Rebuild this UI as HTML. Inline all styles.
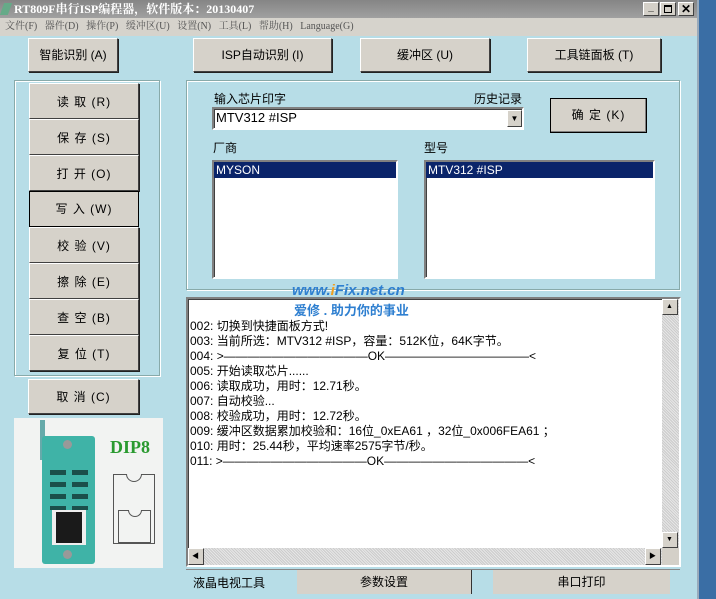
<!DOCTYPE html><html><head><meta charset="utf-8"><style>
*{margin:0;padding:0;box-sizing:border-box}
body{width:716px;height:599px;overflow:hidden;background:#b7dde7;font-family:"Liberation Sans","Noto Sans CJK SC",sans-serif;font-size:12px;color:#000;position:relative}
.a{position:absolute}
.btn{position:absolute;background:#d6d2ca;border:1px solid;border-color:#fff #404040 #404040 #fff;box-shadow:1px 1px 0 #222;text-align:center;font-size:12px;letter-spacing:1px}
.tb{letter-spacing:0}
.grp{position:absolute;border:1px solid #8aa;box-shadow:1px 1px 0 #fff inset,1px 1px 0 #fff}
.lb{position:absolute;background:#fff;border:2px solid;border-color:#808080 #fff #fff #808080;box-shadow:inset 1px 1px 0 #404040}
.sel{background:#0a246a;color:#fff;height:16px;line-height:16px;padding-left:2px}
.log div{height:15px;line-height:15px;white-space:nowrap}
.chk{background-color:#e6e6e6;background-image:repeating-linear-gradient(45deg,#ccc 0 1px,transparent 1px 2px)}
</style></head><body>
<div class="a" style="left:0;top:0;width:697px;height:18px;background:linear-gradient(#858585,#a0a0a0);color:#fff;font-weight:bold;font-size:12px;line-height:18px;padding-left:14px;font-family:'Liberation Serif','Noto Serif CJK SC',serif">RT809F串行ISP编程器，软件版本：20130407</div>
<div class="a" style="left:2px;top:3px;width:8px;height:12px;background:#6a8;transform:skew(-20deg)"></div>
<div class="a" style="left:643px;top:2px;width:16px;height:14px;background:#d4d0c8;border:1px solid;border-color:#fff #404040 #404040 #fff;font-size:10px;text-align:center;line-height:10px;font-weight:bold">_</div>
<div class="a" style="left:660px;top:2px;width:16px;height:14px;background:#d4d0c8;border:1px solid;border-color:#fff #404040 #404040 #fff"><div class="a" style="left:3px;top:2px;width:8px;height:8px;border:1px solid #000;border-top-width:2px"></div></div>
<div class="a" style="left:678px;top:2px;width:16px;height:14px;background:#d4d0c8;border:1px solid;border-color:#fff #404040 #404040 #fff;font-size:12px;text-align:center;line-height:12px;font-weight:bold">✕</div>
<div class="a" style="left:697px;top:0;width:19px;height:599px;background:#3a6ea5;border-left:2px solid #9ab"></div>
<div class="a" style="left:0;top:18px;width:697px;height:18px;background:#d6d3cc;color:#555;font-size:10px;line-height:18px;padding-left:5px;word-spacing:5px;font-family:'Liberation Serif','Noto Serif CJK SC',serif">文件(F) 器件(D) 操作(P) 缓冲区(U) 设置(N) 工具(L) 帮助(H) Language(G)</div>

<div class="btn tb" style="left:28px;top:38px;width:90px;height:34px;line-height:32px">智能识别 (A)</div>
<div class="btn tb" style="left:193px;top:38px;width:139px;height:34px;line-height:32px">ISP自动识别 (I)</div>
<div class="btn tb" style="left:360px;top:38px;width:130px;height:34px;line-height:32px">缓冲区 (U)</div>
<div class="btn tb" style="left:527px;top:38px;width:134px;height:34px;line-height:32px">工具链面板 (T)</div>

<div class="grp" style="left:14px;top:80px;width:146px;height:296px"></div>
<div class="btn" style="left:29px;top:83px;width:110px;height:36px;line-height:36px">读 取 (R)</div>
<div class="btn" style="left:29px;top:119px;width:110px;height:36px;line-height:36px">保 存 (S)</div>
<div class="btn" style="left:29px;top:155px;width:110px;height:36px;line-height:36px">打 开 (O)</div>
<div class="btn" style="left:29px;top:191px;width:110px;height:36px;line-height:34px;border:1px solid #000;box-shadow:none">写 入 (W)</div>
<div class="btn" style="left:29px;top:227px;width:110px;height:36px;line-height:36px">校 验 (V)</div>
<div class="btn" style="left:29px;top:263px;width:110px;height:36px;line-height:36px">擦 除 (E)</div>
<div class="btn" style="left:29px;top:299px;width:110px;height:36px;line-height:36px">查 空 (B)</div>
<div class="btn" style="left:29px;top:335px;width:110px;height:36px;line-height:36px">复 位 (T)</div>
<div class="btn" style="left:28px;top:379px;width:111px;height:35px;line-height:35px">取 消 (C)</div>

<div class="a" style="left:14px;top:418px;width:149px;height:150px;background:#f2f3f2"></div>
<div class="a" style="left:40px;top:420px;width:5px;height:40px;background:#6aa;"></div>
<div class="a" style="left:42px;top:436px;width:53px;height:128px;background:#3fb3a7;border-radius:3px"></div>
<div class="a" style="left:63px;top:440px;width:9px;height:9px;border-radius:50%;background:#999"></div>
<div class="a" style="left:63px;top:550px;width:9px;height:9px;border-radius:50%;background:#999"></div>
<div class="a" style="left:50px;top:470px;width:38px;height:40px;background:repeating-linear-gradient(#1b4f4a 0 5px,#3fb3a7 5px 12px)"></div>
<div class="a" style="left:66px;top:470px;width:6px;height:40px;background:#3fb3a7"></div>
<div class="a" style="left:52px;top:510px;width:34px;height:35px;background:#eee"></div>
<div class="a" style="left:56px;top:512px;width:26px;height:31px;background:#1a1a1a"></div>
<div class="a" style="left:110px;top:437px;font-family:'Liberation Serif',serif;font-size:18px;font-weight:bold;color:#2a9a30">DIP8</div>
<div class="a" style="left:113px;top:474px;width:42px;height:70px;border:1px solid #555"></div>
<div class="a" style="left:126px;top:474px;width:16px;height:8px;border:1px solid #555;border-top:none;border-radius:0 0 8px 8px;background:#f2f3f2"></div>
<div class="a" style="left:118px;top:510px;width:33px;height:33px;border:1px solid #555"></div>
<div class="a" style="left:128px;top:510px;width:14px;height:7px;border:1px solid #555;border-top:none;border-radius:0 0 7px 7px;background:#f2f3f2"></div>

<div class="grp" style="left:186px;top:80px;width:494px;height:210px"></div>
<div class="a" style="left:214px;top:90px">输入芯片印字</div>
<div class="a" style="left:474px;top:90px">历史记录</div>
<div class="lb" style="left:212px;top:107px;width:312px;height:23px;padding-left:2px;line-height:18px;font-size:13px">MTV312 #ISP</div>
<div class="btn" style="left:507px;top:110px;width:15px;height:17px;font-size:8px;line-height:15px;box-shadow:none;letter-spacing:0">▼</div>
<div class="btn" style="left:550px;top:98px;width:97px;height:35px;line-height:33px;border:1px solid #000;box-shadow:inset -1px -1px 0 #808080">确 定 (K)</div>
<div class="a" style="left:213px;top:139px">厂商</div>
<div class="a" style="left:424px;top:139px">型号</div>
<div class="lb" style="left:212px;top:160px;width:186px;height:119px"><div class="sel">MYSON</div></div>
<div class="lb" style="left:424px;top:160px;width:231px;height:119px"><div class="sel">MTV312 #ISP</div></div>

<div class="lb log" style="left:186px;top:297px;width:495px;height:270px;padding:20px 0 0 2px;font-size:12px">
<div>002: 切换到快捷面板方式!</div><div>003: 当前所选：MTV312 #ISP，容量：512K位，64K字节。</div><div>004: &gt;————————————OK————————————&lt;</div><div>005: 开始读取芯片......</div><div>006: 读取成功，用时：12.71秒。</div><div>007: 自动校验...</div><div>008: 校验成功，用时：12.72秒。</div><div>009: 缓冲区数据累加校验和：16位_0xEA61 ，32位_0x006FEA61 ；</div><div>010: 用时：25.44秒，平均速率2575字节/秒。</div><div>011: &gt;————————————OK————————————&lt;</div>
</div>
<div class="a chk" style="left:662px;top:299px;width:17px;height:249px"></div>
<div class="btn" style="left:662px;top:299px;width:16px;height:16px;box-shadow:none;font-size:7px;line-height:14px">▲</div>
<div class="btn" style="left:662px;top:532px;width:16px;height:16px;box-shadow:none;font-size:7px;line-height:14px">▼</div>
<div class="a chk" style="left:188px;top:548px;width:474px;height:17px"></div>
<div class="btn" style="left:188px;top:548px;width:16px;height:17px;box-shadow:none;font-size:7px;line-height:15px">◀</div>
<div class="btn" style="left:645px;top:548px;width:16px;height:17px;box-shadow:none;font-size:7px;line-height:15px">▶</div>
<div class="a" style="left:662px;top:548px;width:17px;height:17px;background:#d4d0c8"></div>

<div class="a" style="left:292px;top:282px;font-size:15px;font-weight:bold;font-style:italic;color:#2e7fd0">www.<span style="color:#f0a020">i</span>Fix.net.cn</div>
<div class="a" style="left:294px;top:300px;font-size:13px;font-weight:bold;color:#2e7fd0">爱修 . 助力你的事业</div>

<div class="a" style="left:186px;top:569px;width:494px;height:26px;border-top:1px solid #888"></div>
<div class="a" style="left:193px;top:574px;font-size:12px">液晶电视工具</div>
<div class="a" style="left:297px;top:570px;width:175px;height:24px;background:#d6d2ca;border-right:1px solid #333;text-align:center;line-height:24px">参数设置</div>
<div class="a" style="left:493px;top:570px;width:177px;height:24px;background:#d6d2ca;text-align:center;line-height:24px">串口打印</div>
</body></html>
